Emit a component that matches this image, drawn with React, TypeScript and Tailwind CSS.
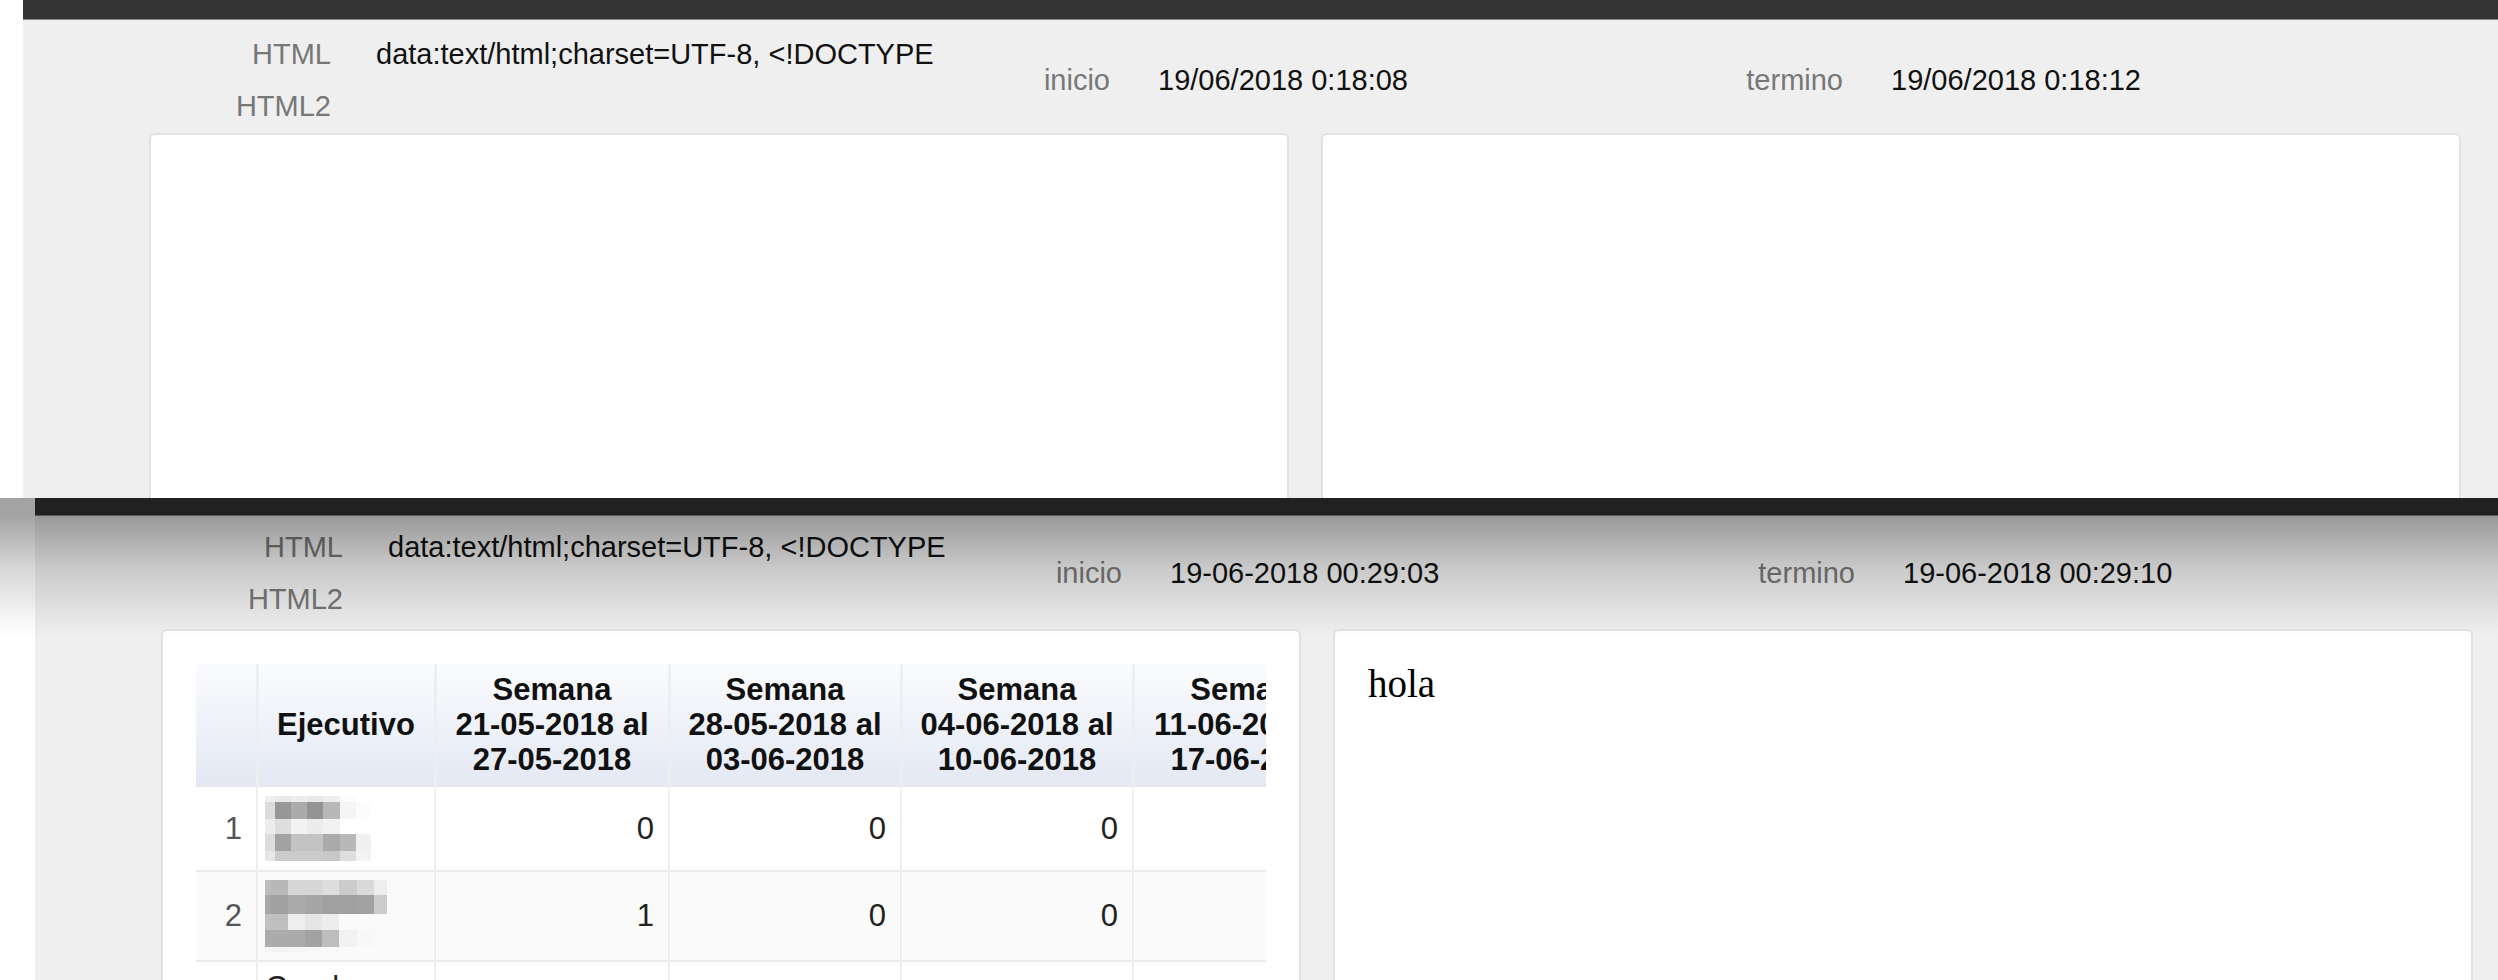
import React from 'react';

// pixelated (blurred) name cells, drawn as blocks
interface MosaicProps {
  cols: number[];
  rows: number[];
  colors: string[][];
}

const Mosaic: React.FC<MosaicProps> = ({ cols, rows, colors }) => {
  const width = cols.reduce((a, b) => a + b, 0);
  const height = rows.reduce((a, b) => a + b, 0);
  let y = 0;
  return (
    <svg width={width} height={height} shapeRendering="crispEdges" className="block">
      {rows.map((h, r) => {
        let x = 0;
        const cells = cols.map((w, c) => {
          const rect = <rect key={c} x={x} y={y} width={w} height={h} fill={colors[r][c]} />;
          x += w;
          return rect;
        });
        y += h;
        return <g key={r}>{cells}</g>;
      })}
    </svg>
  );
};

const nameOne: MosaicProps = {
  cols: [10, 16, 16, 16, 17, 16, 15, 9],
  rows: [6, 17, 15, 17, 10],
  colors: [
    ['#f0f0f0', '#e8e8e8', '#ececec', '#e8e8e8', '#efefef', '#fcfcfc', '#ffffff', '#ffffff'],
    ['#dcdcdc', '#979797', '#ababab', '#949494', '#b8b8b8', '#f5f5f5', '#fcfcfc', '#ffffff'],
    ['#ededed', '#dedede', '#f2f2f2', '#ececec', '#f2f2f2', '#ffffff', '#ffffff', '#ffffff'],
    ['#dddddd', '#a2a2a2', '#c3c3c3', '#c3c3c3', '#aaaaaa', '#b8b8b8', '#f0f0f0', '#ffffff'],
    ['#e6e6e6', '#cbcbcb', '#cbcbcb', '#cbcbcb', '#c8c8c8', '#dedede', '#f3f3f3', '#ffffff'],
  ],
};

const nameTwo: MosaicProps = {
  cols: [6, 17, 17, 17, 17, 18, 17, 13],
  rows: [15, 19, 16, 17, 5],
  colors: [
    ['#bdbdbd', '#b8b8b8', '#d6d6d6', '#d6d6d6', '#dddddd', '#cccccc', '#dadada', '#eeeeee'],
    ['#a8a8a8', '#a0a0a0', '#aaaaaa', '#a6a6a6', '#a0a0a0', '#a0a0a0', '#a2a2a2', '#cccccc'],
    ['#c2c2c2', '#c0c0c0', '#eeeeee', '#e6e6e6', '#ededed', '#fafafa', '#fafafa', '#fafafa'],
    ['#acacac', '#ababab', '#aaaaaa', '#a2a2a2', '#bdbdbd', '#f2f2f2', '#f8f8f8', '#fafafa'],
    ['#f5f5f5', '#f3f3f3', '#f5f5f5', '#f7f7f7', '#f9f9f9', '#fafafa', '#fafafa', '#fafafa'],
  ],
};

const weeks = [
  ['21-05-2018 al', '27-05-2018'],
  ['28-05-2018 al', '03-06-2018'],
  ['04-06-2018 al', '10-06-2018'],
  ['11-06-2018 al', '17-06-2018'],
];

const rows: { name: React.ReactNode; values: number[]; striped: boolean }[] = [
  { name: <Mosaic {...nameOne} />, values: [0, 0, 0, 0], striped: false },
  { name: <Mosaic {...nameTwo} />, values: [1, 0, 0, 0], striped: true },
  { name: <span>Carol<br />Araya</span>, values: [0, 0, 0, 0], striped: false },
];

const ReportTable: React.FC = () => (
  <div className="w-[1070px] overflow-hidden">
    <table className="w-[1169px] table-fixed border-collapse font-['Liberation_Sans',Arial,sans-serif]">
      <colgroup>
        <col className="w-[61px]" />
        <col className="w-[178px]" />
        <col className="w-[234px]" />
        <col className="w-[232px]" />
        <col className="w-[232px]" />
        <col className="w-[232px]" />
      </colgroup>
      <thead>
        <tr className="border-b-2 border-[#e4e6ea]">
          <th className="h-[122px] bg-[linear-gradient(to_bottom,#fafbfd,#e3e8f3)]" />
          <th className="border-l-[3px] border-[#eceef2] bg-[linear-gradient(to_bottom,#fafbfd,#e3e8f3)] px-[10px] text-center align-middle text-[31px] font-bold leading-[35px] text-[#111]">
            Ejecutivo
          </th>
          {weeks.map(([from, to]) => (
            <th
              key={from}
              className="border-l-[3px] border-[#eceef2] bg-[linear-gradient(to_bottom,#fafbfd,#e3e8f3)] px-[10px] py-[8px] text-center align-middle text-[31px] font-bold leading-[35px] whitespace-nowrap text-[#111]"
            >
              Semana
              <br />
              {from}
              <br />
              {to}
            </th>
          ))}
        </tr>
      </thead>
      <tbody>
        {rows.map((row, i) => (
          <tr key={i} className={`border-b-2 border-[#ebebeb] ${row.striped ? 'bg-[#fafafa]' : 'bg-white'}`}>
            <td className="h-[85px] pr-[14px] text-right align-middle text-[31px] leading-[36px] text-[#555]">{i + 1}</td>
            <td className="border-l-2 border-[#eeeeee] py-[8px] pl-[7px] align-middle text-[31px] leading-[36px] text-[#222]">
              {row.name}
            </td>
            {row.values.map((v, j) => (
              <td key={j} className="border-l-2 border-[#eeeeee] pr-[14px] text-right align-middle text-[31px] leading-[36px] text-[#222]">
                {v}
              </td>
            ))}
          </tr>
        ))}
      </tbody>
    </table>
  </div>
);

interface SessionProps {
  html: string;
  inicio: string;
  termino: string;
  first?: boolean;
  height: string;
  shaded?: boolean;
  left?: React.ReactNode;
  right?: React.ReactNode;
}

const Session: React.FC<SessionProps> = ({ html, inicio, termino, first, height, shaded, left, right }) => (
  <section className={`relative flex overflow-hidden font-['Liberation_Sans',Arial,sans-serif] text-[29px] ${height}`}>
    <div className={`shrink-0 bg-white ${first ? 'w-[23px]' : 'w-[35px]'}`} />
    <div className="w-[2564px] shrink-0 bg-[#efefef]">
      <div className={`border-b border-[#8a8a8a] bg-[#333333] ${first ? 'h-[20px]' : 'h-[18px]'}`} />

      <div className={`flex items-center ${first ? 'pt-[9px]' : 'pt-[6px]'}`}>
        <div className="w-[960px] shrink-0">
          <div className="flex h-[52px] items-center">
            <span className="w-[308px] text-right text-[#777]">HTML</span>
            <span className="ml-[45px] whitespace-nowrap text-[#111]">{html}</span>
          </div>
          <div className="flex h-[52px] items-center">
            <span className="w-[308px] text-right text-[#777]">HTML2</span>
          </div>
        </div>
        <div className="flex w-[735px] shrink-0 items-center">
          <span className="w-[127px] text-right text-[#777]">inicio</span>
          <span className="ml-[48px] text-[#111]">{inicio}</span>
        </div>
        <div className="flex items-center">
          <span className="w-[125px] text-right text-[#777]">termino</span>
          <span className="ml-[48px] text-[#111]">{termino}</span>
        </div>
      </div>

      <div className={`flex gap-[32px] px-[126px] ${first ? 'mt-0' : 'mt-[3px]'}`}>
        <div className="h-[600px] flex-1 rounded-[6px] border-2 border-[#e2e2e2] bg-white p-[33px]">{left}</div>
        <div className="h-[600px] flex-1 rounded-[6px] border-2 border-[#e2e2e2] bg-white p-[33px]">{right}</div>
      </div>
    </div>

    {shaded && (
      <div className="pointer-events-none absolute inset-x-0 top-0 h-[140px] bg-[linear-gradient(to_bottom,rgba(0,0,0,0.36)_0px,rgba(0,0,0,0.36)_18px,rgba(0,0,0,0.16)_69px,rgba(0,0,0,0.04)_119px,rgba(0,0,0,0)_140px)]" />
    )}
  </section>
);

export default function App() {
  return (
    <div className="h-[980px] w-[2498px] overflow-hidden bg-white">
      <Session
        html="data:text/html;charset=UTF-8, <!DOCTYPE"
        inicio="19/06/2018 0:18:08"
        termino="19/06/2018 0:18:12"
        first
        height="h-[498px]"
      />
      <Session
        html="data:text/html;charset=UTF-8, <!DOCTYPE"
        inicio="19-06-2018 00:29:03"
        termino="19-06-2018 00:29:10"
        height="h-[482px]"
        shaded
        left={<ReportTable />}
        right={<p className="font-['Liberation_Serif','Times_New_Roman',serif] text-[39px] leading-[40px] text-black">hola</p>}
      />
    </div>
  );
}
